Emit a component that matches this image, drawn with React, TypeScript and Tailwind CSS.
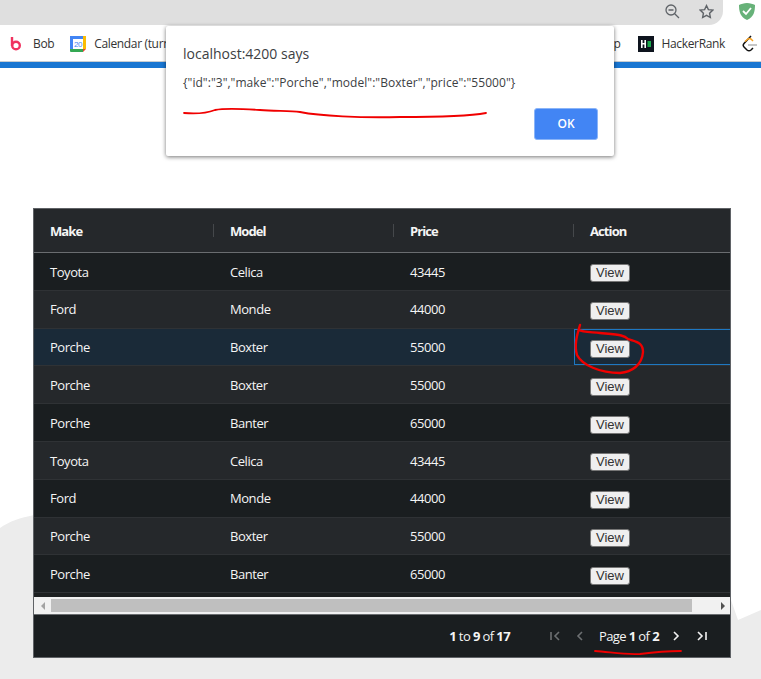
const rows = [
  ["Toyota", "Celica", "43445"],
  ["Ford", "Monde", "44000"],
  ["Porche", "Boxter", "55000"],
  ["Porche", "Boxter", "55000"],
  ["Porche", "Banter", "65000"],
  ["Toyota", "Celica", "43445"],
  ["Ford", "Monde", "44000"],
  ["Porche", "Boxter", "55000"],
  ["Porche", "Banter", "65000"],
];

function BobIcon() {
  return (
    <svg width="12" height="14" viewBox="0 0 12 14" fill="none" stroke="#f0325f" strokeWidth="2.4">
      <path d="M2 0v9" />
      <circle cx="6" cy="8.5" r="3.8" />
    </svg>
  );
}

function CalendarIcon() {
  return (
    <svg width="16" height="16" viewBox="0 0 16 16">
      <rect width="16" height="16" rx="1" fill="#fff" />
      <path d="M0 0h13v3H3v10H0z" fill="#4285f4" />
      <path d="M13 0h3v13h-3z" fill="#fbbc04" />
      <path d="M0 13h13v3H1a1 1 0 0 1-1-1z" fill="#34a853" />
      <path d="M13 13h3l-3 3z" fill="#ea4335" />
      <text x="8" y="11" textAnchor="middle" fontSize="8" fontFamily="Liberation Sans" fill="#4285f4">20</text>
    </svg>
  );
}

function HackerRankIcon() {
  return (
    <svg width="16" height="16" viewBox="0 0 16 16">
      <rect width="16" height="16" fill="#0e141e" />
      <path d="M3 4h1.6v3h1.8V4H8v8H6.400V8.500H4.600V12H3z" fill="#fff" />
      <rect x="9.500" y="5" width="3.500" height="6" fill="#1ba94c" />
    </svg>
  );
}

function LeetCodeIcon() {
  return (
    <svg width="15" height="18" viewBox="0 0 15 18" fill="none">
      <path d="M9 1 2 8.500c-1 1.200-1 2.500 0 3.500l3 3c1.200 1 2.800 1 4 0l2-2" stroke="#111" strokeWidth="1.500" />
      <path d="M3 6.500 6 4c1-.6 2-.6 3 0l2 2" stroke="#f89f1b" strokeWidth="1.500" />
      <path d="M6 10h9" stroke="#b3b3b3" strokeWidth="1.500" />
    </svg>
  );
}

function Chrome() {
  return (
    <>
      <div className="flex h-[25px]">
        <div className="mr-[38px] flex flex-1 items-center justify-end gap-[19px] rounded-br-[14px] bg-[#dfdfdf] pr-[9px] pb-[2px]">
          <svg width="15" height="15" viewBox="0 0 15 15" fill="none" stroke="#5f6368" strokeWidth="1.300">
            <circle cx="6" cy="6" r="5" />
            <path d="M3.500 6h5M9.700 9.700l4.300 4.300" />
          </svg>
          <svg width="15" height="15" viewBox="0 0 24 24" fill="none" stroke="#5f6368" strokeWidth="2.200">
            <path d="M12 2.500l3 6.400 7 .9-5.100 4.800 1.300 7-6.200-3.400-6.200 3.400 1.300-7L2 9.800l7-.9z" />
          </svg>
        </div>
      </div>
      <div className="flex h-[36px] items-center bg-white pt-[1px] text-[12px] tracking-[-0.35px] text-[#333]">
        <div className="flex items-center pl-[10px]">
          <BobIcon />
          <span className="ml-[11px]">Bob</span>
          <span className="ml-[16px]"><CalendarIcon /></span>
          <span className="ml-[8px]">Calendar (turn</span>
        </div>
        <div className="ml-auto flex items-center pr-[4px]">
          <span className="mr-[17px]">p</span>
          <HackerRankIcon />
          <span className="ml-[8px]">HackerRank</span>
          <span className="ml-[17px]"><LeetCodeIcon /></span>
        </div>
      </div>
      <div className="h-[1px] bg-[#c9cdd1]" />
      <div className="h-[6px] bg-[#1976d2]" />
    </>
  );
}

function AlertDialog() {
  return (
    <div className="absolute left-[166px] top-[26px] z-20 h-[130px] w-[448px] rounded-[2px] bg-white px-[17px] pt-[18px] shadow-[0_1px_4px_rgba(0,0,0,0.55)]">
      <div className="text-[14px] leading-[20px] text-[#3c4043]">localhost:4200 says</div>
      <div className="mt-[10px] text-[12px] leading-[18px] tracking-[0.05px] text-[#3c4043]">
        {'{"id":"3","make":"Porche","model":"Boxter","price":"55000"}'}
      </div>
      <button className="absolute left-[368px] top-[82px] h-[32px] w-[64px] rounded-[3px] border border-[#8ab4f8] bg-[#4285f4] text-[12px] font-semibold text-white">
        OK
      </button>
    </div>
  );
}

function PagerIcon({ d, dim }: { d: string; dim?: boolean }) {
  return (
    <svg width="12" height="12" viewBox="0 0 12 12" fill="none" stroke={dim ? "#6d7072" : "#f2f2f2"} strokeWidth="1.600">
      <path d={d} />
    </svg>
  );
}

function Grid() {
  return (
    <div className="mx-[33px] mt-[140px] w-[698px] border border-[#5f6266] bg-[#1c1f20] text-[13px] tracking-[-0.45px] text-[#f5f5f5]">
      <div className="grid h-[44px] grid-cols-[180px_180px_180px_1fr] items-center border-b border-[#6a6d70] bg-[#25282b] font-bold tracking-[-0.9px]">
        {["Make", "Model", "Price", "Action"].map((h, i) => (
          <div key={h} className="relative pl-[16px] pt-[2px]">
            {i > 0 && <span className="absolute -left-px top-[4px] h-[13px] w-px bg-[#45484b]" />}
            {h}
          </div>
        ))}
      </div>
      <div className="pb-[4px]">
        {rows.map((r, i) => (
          <div
            key={i}
            className={`grid h-[37.8px] grid-cols-[180px_180px_180px_1fr] items-center border-b border-[#2f3235] ${
              i === 2 ? "bg-[#1a2a38]" : i % 2 === 0 ? "bg-[#1a1e20]" : "bg-[#25282b]"
            }`}
          >
            {r.map((c, j) => (
              <div key={j} className="pl-[16px] pt-[2px]">{c}</div>
            ))}
            <div className={`flex h-full items-center pl-[15px] pt-[4px] ${i === 2 ? "border border-r-0 border-[#1e78c2] pt-[3px]" : "border border-transparent"}`}>
              <button className="h-[18px] w-[40px] rounded-[3px] border border-[#767676] bg-[#efefef] font-['Liberation_Sans',sans-serif] text-[13px] leading-[14px] tracking-normal text-[#333]">
                View
              </button>
            </div>
          </div>
        ))}
      </div>
      <div className="flex h-[17px] items-center bg-[#f1f1f1]">
        <div className="flex w-[17px] justify-center">
          <span className="h-0 w-0 border-y-[4px] border-r-[4px] border-y-transparent border-r-[#a3a3a3]" />
        </div>
        <div className="h-[13px] w-[641px] bg-[#bfbfbf]" />
        <div className="flex flex-1 justify-end pr-[5px]">
          <span className="h-0 w-0 border-y-[4px] border-l-[4px] border-y-transparent border-l-[#505050]" />
        </div>
      </div>
      <div className="flex h-[43px] items-center justify-end border-t border-[#6a6d70] bg-[#1a1e20] pr-[22px] tracking-[-0.6px]">
        <span className="mr-[39px] pt-[2px]"><b>1</b> to <b>9</b> of <b>17</b></span>
        <span className="mr-[13px]"><PagerIcon dim d="M2 2v8M10 2 6 6l4 4" /></span>
        <span className="mr-[13px]"><PagerIcon dim d="M8 2 4 6l4 4" /></span>
        <span className="mr-[11px] pt-[2px]">Page <b>1</b> of <b>2</b></span>
        <span className="mr-[14px]"><PagerIcon d="M4 2l4 4-4 4" /></span>
        <PagerIcon d="M2 2l4 4-4 4M10 2v8" />
      </div>
    </div>
  );
}

export default function App() {
  return (
    <div className="relative h-[679px] w-[761px] overflow-hidden bg-white font-['Open_Sans',sans-serif]">
      {/* background wave behind the grid */}
      <svg className="absolute left-0 top-0" width="761" height="679" viewBox="0 0 761 679">
        <path d="M0 528C10 521 20 518 34 515L731 600L738 620L761 610V679H0Z" fill="#ececec" />
      </svg>
      <div className="relative">
        <Chrome />
        <Grid />
      </div>
      <AlertDialog />
      {/* red pen marks on top of the screenshot */}
      <svg className="absolute left-0 top-0 z-30" width="761" height="679" viewBox="0 0 761 679" fill="none" stroke="#f00000" strokeWidth="1.800" strokeLinecap="round">
        <path d="M184 113C195 114 207 113 215 110C225 108 245 109 260 110C275 111 290 111 300 112C320 116 360 118 400 117C440 117 470 116 486 113" />
        <path d="M580 325C577 335 574 345 577 355C582 365 600 373 620 373C632 372 642 365 643 352C643 342 636 342 628 339C624 335 620 335 600 333C590 332 582 332 579 330" strokeWidth="2.400" />
        <path d="M595 651C610 652 625 655 640 654C655 652 670 651 681 651" />
      </svg>
      {/* extension shield */}
      <svg className="absolute left-[739px] top-[3px]" width="16" height="17" viewBox="0 0 16 17">
        <path d="M8 0C5 0 2 1 0 2c0 6 1 12 8 15 7-3 8-9 8-15C14 1 11 0 8 0z" fill="#67b279" />
        <path d="M4 8l3 3 5-6" fill="none" stroke="#fff" strokeWidth="1.800" />
      </svg>
    </div>
  );
}
